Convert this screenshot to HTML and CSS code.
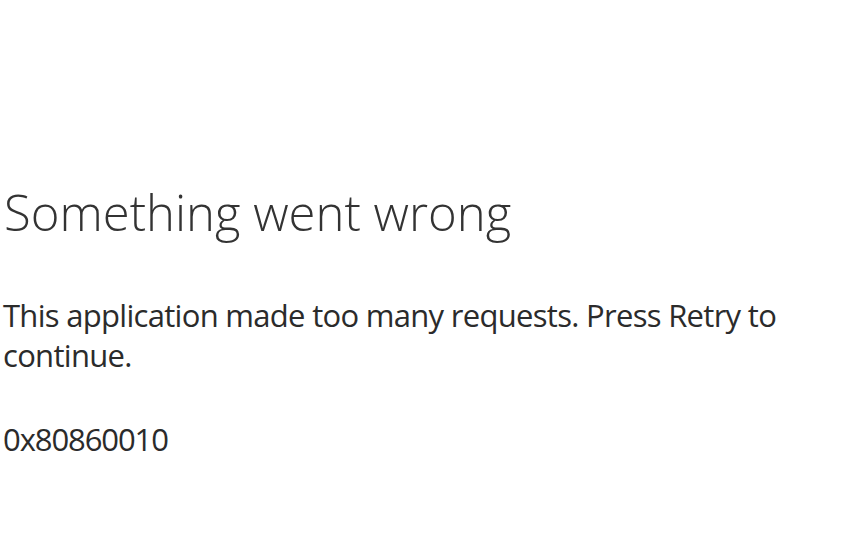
FILE: index.html
```html
<!DOCTYPE html>
<html>
  <head>
    <meta charset="utf-8">
    <title>Something went wrong</title>
    <link rel="stylesheet" href="styles.css">
  </head>
  <body>
    <!-- error message -->
    <div class="error">
      <h1 class="error-title">Something went wrong</h1>
      <p class="error-text">This application made too many requests. Press Retry to continue.</p>
      <p class="error-code">0x80860010</p>
    </div>
  </body>
</html>
```

FILE: styles.css
```css
body {
  margin: 0;
  background-color: #fff;
  color: #2b2b2b;
  font-family: 'Open Sans', 'Noto Sans', sans-serif;
}

/* error block */

.error {
  padding: 182px 0 0 3px;
  width: 800px;
}
.error-title {
  margin: 0 0 52px 0;
  padding-left: 1px;
  font-size: 49px;
  font-weight: 300;
  line-height: 61px;
  color: #333;
}
.error-text,.error-code {
  font-size: 31px;
  line-height: 40px;
}
.error-text {
  margin: 0;
  letter-spacing: -0.7px;
}
.error-code {
  margin: 44px 0 0 0;
  letter-spacing: -1.1px;
}
```
